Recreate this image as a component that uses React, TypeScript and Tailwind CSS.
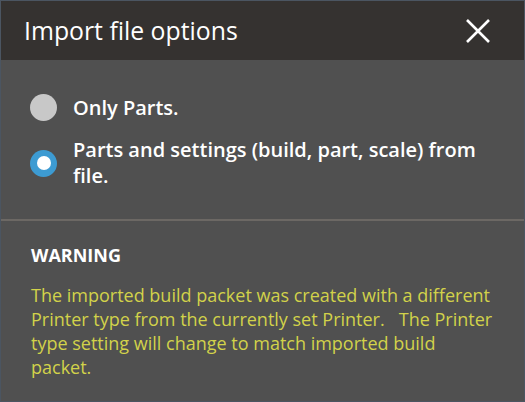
import { useState } from 'react';

// ==================== Types ====================

type ImportMode = 'parts' | 'partsAndSettings';

interface RadioOptionProps {
  label: string;
  checked: boolean;
  onSelect: () => void;
}

// ==================== Components ====================

const RadioOption = ({ label, checked, onSelect }: RadioOptionProps) => (
  <button type="button" onClick={onSelect} className="flex items-center gap-[16px] text-left w-full">
    <span
      className={
        checked
          ? 'shrink-0 w-[27px] h-[27px] rounded-full bg-[#3d9bd2] flex items-center justify-center'
          : 'shrink-0 w-[27px] h-[27px] rounded-full bg-[#c8c8c8]'
      }
    >
      {checked && <span className="w-[14px] h-[14px] rounded-full bg-white" />}
    </span>
    <span className="text-[20px] leading-[26px] font-semibold text-white">{label}</span>
  </button>
);

export default function App() {
  const [mode, setMode] = useState<ImportMode>('partsAndSettings');

  return (
    <div
      className="w-[525px] h-[402px] border border-[#4b5561] bg-[#505050] flex flex-col"
      style={{ fontFamily: '"Open Sans", "Noto Sans", sans-serif' }}
    >
      <div className="h-[59px] bg-[#353230] flex items-center justify-between pl-[23px] pr-[33px]">
        <h1 className="text-[24.8px] text-white">Import file options</h1>
        <button type="button" aria-label="Close" className="text-white">
          <svg width="26" height="26" viewBox="0 0 26 26" fill="none" stroke="currentColor" strokeWidth={2.6}>
            <path d="M2 2L24 24M24 2L2 24" />
          </svg>
        </button>
      </div>

      <div className="flex flex-col gap-[16px] pl-[29px] pr-[30px] pt-[34px] pb-[30px] border-b-2 border-[#6c6864]">
        <RadioOption label="Only Parts." checked={mode === 'parts'} onSelect={() => setMode('parts')} />
        <RadioOption
          label="Parts and settings (build, part, scale) from file."
          checked={mode === 'partsAndSettings'}
          onSelect={() => setMode('partsAndSettings')}
        />
      </div>

      <div className="pl-[30px] pr-[30px] pt-[22px]">
        <div className="text-[18px] font-bold text-white leading-[24px]">WARNING</div>
        <p className="mt-[16px] text-[18px] leading-[24px] text-[#d2d24a]">
          The imported build packet was created with a different Printer type from the currently set
          Printer.&nbsp;&nbsp; The Printer type setting will change to match imported build packet.
        </p>
      </div>
    </div>
  );
}
